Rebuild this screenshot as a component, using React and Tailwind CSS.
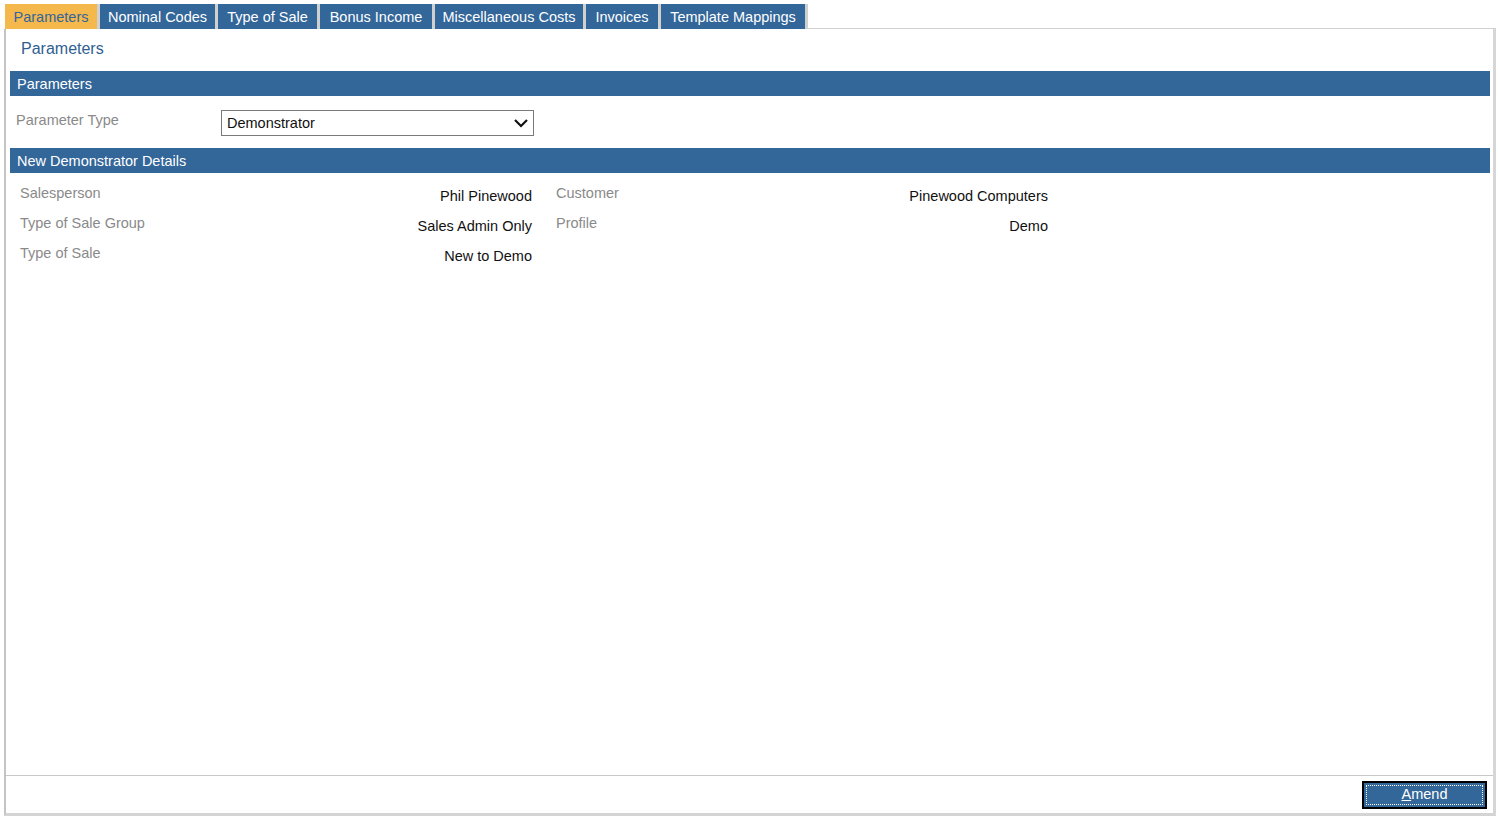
import { useState } from 'react';

// ─── Parameters screen ──────────────────────────────────────────────────────
// Tabbed admin page: parameter type selector plus a read-only details block.

const TABS = [
  { label: 'Parameters', w: 'w-[95px]' },
  { label: 'Nominal Codes', w: 'w-[118px]' },
  { label: 'Type of Sale', w: 'w-[102px]' },
  { label: 'Bonus Income', w: 'w-[115px]' },
  { label: 'Miscellaneous Costs', w: 'w-[151px]' },
  { label: 'Invoices', w: 'w-[75px]' },
  { label: 'Template Mappings', w: 'w-[147px]' },
];

const LEFT_ROWS = [
  ['Salesperson', 'Phil Pinewood'],
  ['Type of Sale Group', 'Sales Admin Only'],
  ['Type of Sale', 'New to Demo'],
];

const RIGHT_ROWS = [
  ['Customer', 'Pinewood Computers'],
  ['Profile', 'Demo'],
];

function SectionBar({ children }) {
  return (
    <div className="h-[25px] bg-[#336699] text-white text-[14.5px] leading-[26px] pl-[7px]">
      {children}
    </div>
  );
}

function DetailRows({ rows, width }) {
  return (
    <div className={`${width} flex flex-col`}>
      {rows.map(([label, value]) => (
        <div key={label} className="h-[30px] flex items-center justify-between">
          <span className="text-[#8a8a8a] -mt-[3px]">{label}</span>
          <span className="text-[#111] mt-[3px]">{value}</span>
        </div>
      ))}
    </div>
  );
}

export default function App() {
  const [active, setActive] = useState(0);

  return (
    <div
      className="h-[818px] w-[1498px] bg-white flex flex-col pl-[4px] pr-[2px] pt-[4px] pb-[2px] text-[14.5px]"
      style={{ fontFamily: "Tahoma, 'Liberation Sans', Arial, sans-serif" }}
    >
      {/* Tabs */}
      <div className="flex h-[25px] pl-px">
        {TABS.map((tab, i) => (
          <button
            key={tab.label}
            onClick={() => setActive(i)}
            className={`${tab.w} h-[25px] border-r-[3px] border-r-[#d0d0d0] text-[14.5px] leading-[27px] text-center ${
              i === active ? 'bg-[#f5b84d] text-[#336699]' : 'bg-[#336699] text-white'
            }`}
          >
            {tab.label}
          </button>
        ))}
        <div className="flex-1 border-b border-b-[#d0d0d0]" />
      </div>

      {/* Panel */}
      <div className="flex-1 flex flex-col border-l-2 border-l-[#c4c4c4] border-r-[3px] border-r-[#d6d6d6] border-b-[3px] border-b-[#d4d4d4]">
        <div className="flex-1 flex flex-col pl-[4px] pr-[3px]">
          <div className="h-[42px] flex items-center pl-[11px] pb-[2px] text-[16px] text-[#2f5f93]">
            Parameters
          </div>

          <SectionBar>Parameters</SectionBar>

          <div className="h-[52px] flex items-center pt-[2px]">
            <span className="w-[211px] pl-[6px] -mt-[5px] text-[#8a8a8a]">Parameter Type</span>
            <div className="w-[313px] h-[26px] border border-[#7a7a7a] flex items-center justify-between pl-[5px] pr-[4px] text-[#111]">
              <span className="mt-[1px]">Demonstrator</span>
              <svg viewBox="0 0 16 16" className="w-[16px] h-[16px]" fill="none" stroke="#111" strokeWidth="2.2">
                <polyline points="2,5 8,11 14,5" />
              </svg>
            </div>
          </div>

          <SectionBar>New Demonstrator Details</SectionBar>

          <div className="flex pt-[7px] pl-[10px]">
            <DetailRows rows={LEFT_ROWS} width="w-[512px]" />
            <div className="w-[24px]" />
            <DetailRows rows={RIGHT_ROWS} width="w-[492px]" />
          </div>
        </div>

        {/* Footer */}
        <div className="h-[38px] border-t border-t-[#c8c8c8] flex items-center justify-end pr-[6px]">
          <button className="w-[125px] h-[28px] bg-[#336699] border-2 border-black p-[2px] mt-[1px]">
            <span className="h-full w-full flex items-center justify-center border border-dotted border-white text-white text-[14.5px]">
              <span>
                <span className="underline">A</span>mend
              </span>
            </span>
          </button>
        </div>
      </div>
    </div>
  );
}
